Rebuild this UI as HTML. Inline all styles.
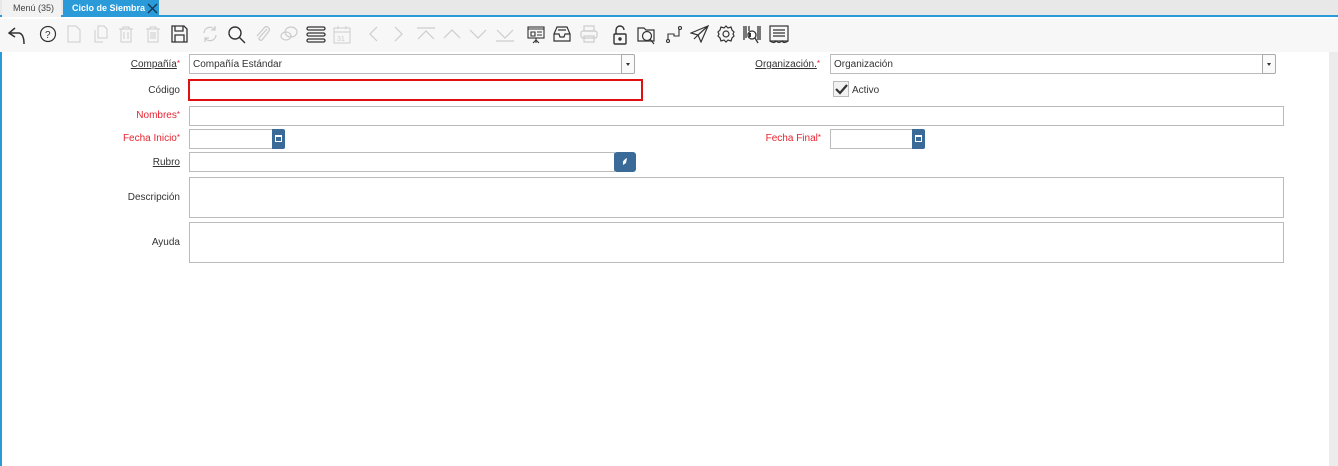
<!DOCTYPE html>
<html><head><meta charset="utf-8"><style>
*{box-sizing:border-box;margin:0;padding:0}
body{width:1338px;height:466px;overflow:hidden;background:#fff;font-family:"Liberation Sans",sans-serif;font-size:10px;color:#333;position:relative}
.a{position:absolute}
.tabs{left:0;top:0;width:1338px;height:17px;background:#e8e8e8;border-bottom:2px solid #2b9ad9}
.tb{left:0;top:19px;width:1338px;height:33px;background:#f7f7f7}
.in{position:absolute;border:1px solid #bbb;background:#fff;height:20px}
.lbl{position:absolute;text-align:right;width:180px;left:0;font-size:10px;color:#333}
.red{color:#e8232f}
.u{text-decoration:underline}
.star{color:#e8232f;font-size:8px;vertical-align:top}
.dd{position:absolute;width:14px;height:20px;border:1px solid #aaa;background:#fafafa;border-radius:0 2px 2px 0}
.dd:after{content:"";position:absolute;left:4px;top:8px;border-left:2.5px solid transparent;border-right:2.5px solid transparent;border-top:3px solid #333}
.cal{position:absolute;width:13px;height:20px;background:#3a6b98;border-radius:0 2px 2px 0}
.cal i{position:absolute;left:3px;top:6px;width:7px;height:7px;border:1px solid #fff;border-top-width:2px}
svg{position:absolute;top:25px}
</style></head><body>
<div class="a tabs">
 <div class="a" style="left:2px;top:0;width:59px;height:17px;background:#f2f2f2;font-size:9px;color:#444;padding:3px 0 0 11px">Menú (35)</div>
 <div class="a" style="left:63px;top:0;width:96px;height:17px;background:#2b9ad9;color:#fff;font-size:9px;font-weight:bold;padding:3px 0 0 9px">Ciclo de Siembra</div>
 <svg style="top:3px;left:147px" width="11" height="11"><path d="M1 1L10 10M10 1L1 10" stroke="#1a3650" stroke-width="1.3"/></svg>
</div>
<div class="a tb"></div>
<svg style="left:7px" width="20" height="20" fill="none" stroke="#333" stroke-width="1.5"><path d="M8 3L2 8L8 12M2 8H12Q17 9 17 19"/></svg>
<svg style="left:39px" width="18" height="18" fill="none" stroke="#333" stroke-width="1.2"><circle cx="9" cy="9" r="7.5"/><text x="6" y="13" font-size="10" fill="#333" stroke="none" font-family="Liberation Sans">?</text></svg>
<svg style="left:66px" width="16" height="18" fill="none" stroke="#ccc"><path d="M2 1H10L14 5V17H2Z"/></svg>
<svg style="left:92px" width="18" height="18" fill="none" stroke="#ccc"><path d="M6 1H12L15 4V13H6ZM3 5V17H11"/></svg>
<svg style="left:118px" width="16" height="18" fill="none" stroke="#ccc"><path d="M1 4H15M5 4V2H11V4M3 4V17H13V4M6 7V14M10 7V14"/></svg>
<svg style="left:145px" width="16" height="18" fill="none" stroke="#ccc"><path d="M1 4H15M5 4V2H11V4M3 4V17H13V4M6 7V14M8 7V14M10 7V14"/></svg>
<svg style="left:171px" width="17" height="18" fill="none" stroke="#333" stroke-width="1.3"><path d="M1 1H13L16 4V17H1ZM4 1V6H12V1M4 10H13V17H4Z"/></svg>
<svg style="left:201px" width="18" height="18" fill="none" stroke="#ccc" stroke-width="1.3"><path d="M3 8A6 6 0 0 1 14 5M15 10A6 6 0 0 1 4 13M14 1V5H10M4 17V13H8"/></svg>
<svg style="left:227px" width="19" height="19" fill="none" stroke="#333" stroke-width="1.4"><circle cx="8" cy="8" r="6"/><path d="M12.5 12.5L18 18"/></svg>
<svg style="left:254px" width="18" height="18" fill="none" stroke="#ccc" stroke-width="1.3"><path d="M13 4L5 13A2 2 0 0 0 8 15L15 6A3 3 0 0 0 11 2L3 11"/></svg>
<svg style="left:280px" width="18" height="18" fill="none" stroke="#ccc" stroke-width="1.2"><ellipse cx="11" cy="7" rx="6" ry="5"/><ellipse cx="6" cy="11" rx="5" ry="4"/></svg>
<svg style="left:306px" width="20" height="18" fill="none" stroke="#333" stroke-width="1.3"><rect x="1" y="2" width="18" height="3" rx="1.5"/><rect x="1" y="8" width="18" height="3" rx="1.5"/><rect x="1" y="14" width="18" height="3" rx="1.5"/></svg>
<svg style="left:333px" width="18" height="19" fill="none" stroke="#ccc"><rect x="1" y="3" width="16" height="15"/><path d="M1 7H17M5 1V4M13 1V4"/><text x="4" y="16" font-size="7" fill="#ccc" stroke="none">31</text></svg>
<svg style="left:367px" width="12" height="18" fill="none" stroke="#ccc" stroke-width="1.2"><path d="M10 2L3 9L10 16"/></svg>
<svg style="left:393px" width="12" height="18" fill="none" stroke="#ccc" stroke-width="1.2"><path d="M2 2L9 9L2 16"/></svg>
<svg style="left:416px" width="20" height="18" fill="none" stroke="#ccc" stroke-width="1.2"><path d="M1 3H19M2 14L10 6L18 14"/></svg>
<svg style="left:442px" width="20" height="18" fill="none" stroke="#ccc" stroke-width="1.2"><path d="M2 13L10 5L18 13"/></svg>
<svg style="left:468px" width="20" height="18" fill="none" stroke="#ccc" stroke-width="1.2"><path d="M2 5L10 13L18 5"/></svg>
<svg style="left:495px" width="20" height="18" fill="none" stroke="#ccc" stroke-width="1.2"><path d="M2 5L10 13L18 5M1 16H19"/></svg>
<svg style="left:527px" width="18" height="19" fill="none" stroke="#333" stroke-width="1.1"><rect x="1" y="2" width="16" height="11"/><path d="M1 4H17M4 7H8V11H4ZM10 7H15M10 10H15M9 13V18M6 18L9 15L12 18"/></svg>
<svg style="left:553px" width="18" height="18" fill="none" stroke="#333" stroke-width="1.2"><path d="M1 9V16H17V9L14 2H4ZM1 9H6L7 12H11L12 9H17M5 5H13"/></svg>
<svg style="left:580px" width="18" height="18" fill="none" stroke="#ccc" stroke-width="1.2"><rect x="4" y="1" width="10" height="5"/><rect x="1" y="6" width="16" height="7" rx="2"/><rect x="4" y="11" width="10" height="6"/></svg>
<svg style="left:612px" width="16" height="20" fill="none" stroke="#333" stroke-width="1.4"><path d="M4 9V5A4 4 0 0 1 12 5"/><rect x="2" y="9" width="12" height="10" rx="1"/><circle cx="8" cy="14" r="1" fill="#333"/></svg>
<svg style="left:637px" width="20" height="20" fill="none" stroke="#333" stroke-width="1.2"><path d="M1 3H7L9 5H17V16H1Z"/><circle cx="10" cy="11" r="4.5"/><path d="M13 14L17 19"/></svg>
<svg style="left:665px" width="18" height="19" fill="none" stroke="#333" stroke-width="1.1"><circle cx="3" cy="16" r="1.5"/><circle cx="15" cy="3" r="1.5"/><path d="M3 14V9H9V11H14V4"/></svg>
<svg style="left:690px" width="19" height="18" fill="none" stroke="#333" stroke-width="1.2"><path d="M1 8L18 1L11 17L8 10ZM8 10L18 1M4 14L8 10"/></svg>
<svg style="left:717px" width="18" height="18" fill="none" stroke="#333" stroke-width="1.2"><circle cx="9" cy="9" r="3"/><path d="M9 1L11 3L14 2L15 5L17 7L16 9L17 11L15 13L14 16L11 15L9 17L7 15L4 16L3 13L1 11L2 9L1 7L3 5L4 2L7 3Z"/></svg>
<svg style="left:743px" width="18" height="19" fill="none" stroke="#333" stroke-width="1.3"><path d="M1 1V15M3 1V13M6 1V6M15 1V15M17 1V15"/><circle cx="9" cy="10" r="4" fill="#fff"/><path d="M12 13L15 18"/><path d="M7 8V12" stroke-width="2"/></svg>
<svg style="left:769px" width="20" height="19" fill="none" stroke="#333" stroke-width="1.2"><rect x="1" y="1" width="18" height="15"/><path d="M4 5H16M4 8H16M4 11H16M1 16Q5 19 7 16Q10 19 13 16Q15 19 19 16"/></svg>

<div class="a" style="left:0;top:52px;width:2px;height:414px;background:#2b9ad9"></div>
<div class="a" style="left:1329px;top:52px;width:9px;height:414px;background:#ececec"></div>

<div class="lbl" style="top:59px"><span class="u">Compañía</span><span class="star">*</span></div>
<div class="in" style="left:189px;top:54px;width:434px;padding:4px 3px;font-size:10px">Compañía Estándar</div>
<div class="dd" style="left:621px;top:54px"></div>

<div class="lbl" style="left:640px;top:59px"><span class="u">Organización.</span><span class="star">*</span></div>
<div class="in" style="left:830px;top:54px;width:434px;padding:4px 3px;font-size:10px">Organización</div>
<div class="dd" style="left:1262px;top:54px"></div>

<div class="lbl" style="top:85px">Código</div>
<div class="a" style="left:188px;top:79px;width:455px;height:22px;border:2px solid #e01010"></div>

<div class="a" style="left:833px;top:81px;width:16px;height:16px;border:1px solid #bbb;background:#f2f2f2"></div>
<svg style="left:834px;top:82px" width="15" height="14"><path d="M2 7L6 11L13 3" fill="none" stroke="#333" stroke-width="2.2"/></svg>
<div class="a" style="left:852px;top:85px;font-size:10px">Activo</div>

<div class="lbl red" style="top:110px">Nombres<span class="star">*</span></div>
<div class="in" style="left:189px;top:106px;width:1095px"></div>

<div class="lbl red" style="top:133px">Fecha Inicio<span class="star">*</span></div>
<div class="in" style="left:189px;top:129px;width:84px"></div>
<div class="cal" style="left:272px;top:129px"><i></i></div>

<div class="lbl red" style="left:641px;top:133px">Fecha Final<span class="star">*</span></div>
<div class="in" style="left:830px;top:129px;width:83px"></div>
<div class="cal" style="left:912px;top:129px"><i></i></div>

<div class="lbl" style="top:157px"><span class="u">Rubro</span></div>
<div class="in" style="left:189px;top:152px;width:426px"></div>
<div class="a" style="left:614px;top:152px;width:22px;height:20px;background:#3a6b98;border-radius:3px"></div>
<svg style="left:620px;top:157px" width="10" height="10"><path d="M7 1Q2 3 3 8L6 6" fill="#fff"/></svg>

<div class="lbl" style="top:192px">Descripción</div>
<div class="in" style="left:189px;top:177px;width:1095px;height:41px"></div>
<div class="lbl" style="top:237px">Ayuda</div>
<div class="in" style="left:189px;top:222px;width:1095px;height:41px"></div>
</body></html>
